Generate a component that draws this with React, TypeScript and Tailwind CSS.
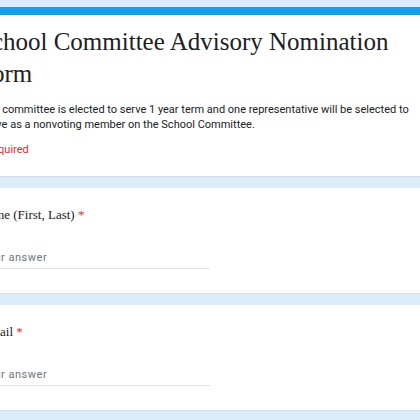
import React from "react";

function Question({ label, offset }: { label: string; offset: string }) {
  return (
    <div className="bg-white border-b border-[#d6dde3] h-[106px] pt-[17px]">
      <div className={offset}>
        <div className="font-['Liberation_Serif',serif] text-[13px] text-[#202124] leading-[20px] h-[20px]">
          {label} <span className="text-[#d93025]">*</span>
        </div>
      </div>
      <div className="ml-[-19px] mt-[25px] w-[229px] border-b border-[#e0e0e0] pb-[2px]">
        <div className="font-['Roboto',sans-serif] text-[11px] leading-[16px] tracking-[0.5px] text-[#70757a]">Your answer</div>
      </div>
    </div>
  );
}

export default function App() {
  return (
    <div className="w-[420px] h-[420px] overflow-hidden bg-[#dcedfa]">
      <div className="pt-[7px] flex flex-col gap-[11px]">
        <div className="bg-white border-t-[8px] border-[#1a9ee9] border-b border-b-[#d6dde3] h-[170px] pt-[11px]">
          <h1 className="ml-[-22px] w-[450px] font-['Liberation_Serif',serif] text-[25px] leading-[32px] text-[#202124]">
            School Committee Advisory Nomination Form
          </h1>
          <p className="ml-[-19px] w-[450px] mt-[12px] font-['Roboto',sans-serif] text-[11px] leading-[15px] text-[#202124]">
            The committee is elected to serve 1 year term and one representative will be selected to serve as a nonvoting member on the School Committee.
          </p>
          <p className="ml-[-22px] mt-[10px] font-['Roboto',sans-serif] text-[11px] leading-[15px] text-[#d93025]">* Required</p>
        </div>
        <Question label="Name (First, Last)" offset="ml-[-21px]" />
        <Question label="Email" offset="ml-[-18px]" />
      </div>
    </div>
  );
}
